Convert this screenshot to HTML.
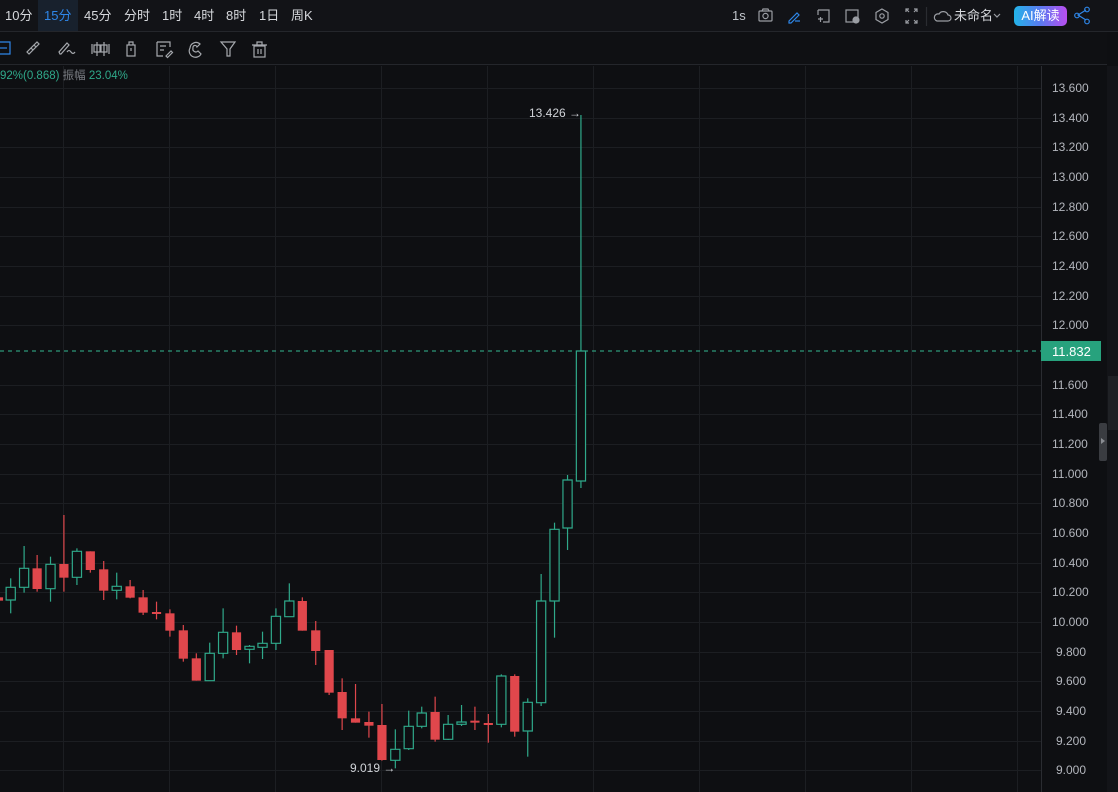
<!DOCTYPE html>
<html><head><meta charset="utf-8"><style>
*{margin:0;padding:0;box-sizing:border-box}
body{width:1118px;height:792px;background:#0e0f12;overflow:hidden;font-family:"Liberation Sans","Noto Sans CJK SC",sans-serif;position:relative;color:#d0d3d8}
.top{position:absolute;left:0;top:0;width:1118px;height:32px;background:#121317;border-bottom:1px solid #24262b}
.tab{position:absolute;top:0;height:31px;line-height:31px;font-size:13px;color:#d6d8dc}
.tb{position:absolute;left:0;top:32px;width:1107px;height:33px;background:#0f1013;border-bottom:1px solid #24262b}
.ax{position:absolute;left:1052px;font-size:12px;color:#b3b6bd}
svg{position:absolute;left:0;top:0}
</style></head><body>
<svg width="1118" height="792">
<g stroke="#1c1e22" stroke-width="1">
<line x1="63.5" y1="66" x2="63.5" y2="792"/><line x1="169.5" y1="66" x2="169.5" y2="792"/><line x1="275.5" y1="66" x2="275.5" y2="792"/><line x1="381.5" y1="66" x2="381.5" y2="792"/><line x1="487.5" y1="66" x2="487.5" y2="792"/><line x1="593.5" y1="66" x2="593.5" y2="792"/><line x1="699.5" y1="66" x2="699.5" y2="792"/><line x1="805.5" y1="66" x2="805.5" y2="792"/><line x1="911.5" y1="66" x2="911.5" y2="792"/><line x1="1017.5" y1="66" x2="1017.5" y2="792"/>
<line x1="0" y1="88.5" x2="1041" y2="88.5"/><line x1="0" y1="118.5" x2="1041" y2="118.5"/><line x1="0" y1="147.5" x2="1041" y2="147.5"/><line x1="0" y1="177.5" x2="1041" y2="177.5"/><line x1="0" y1="207.5" x2="1041" y2="207.5"/><line x1="0" y1="236.5" x2="1041" y2="236.5"/><line x1="0" y1="266.5" x2="1041" y2="266.5"/><line x1="0" y1="296.5" x2="1041" y2="296.5"/><line x1="0" y1="325.5" x2="1041" y2="325.5"/><line x1="0" y1="385.5" x2="1041" y2="385.5"/><line x1="0" y1="414.5" x2="1041" y2="414.5"/><line x1="0" y1="444.5" x2="1041" y2="444.5"/><line x1="0" y1="474.5" x2="1041" y2="474.5"/><line x1="0" y1="503.5" x2="1041" y2="503.5"/><line x1="0" y1="533.5" x2="1041" y2="533.5"/><line x1="0" y1="563.5" x2="1041" y2="563.5"/><line x1="0" y1="592.5" x2="1041" y2="592.5"/><line x1="0" y1="622.5" x2="1041" y2="622.5"/><line x1="0" y1="652.5" x2="1041" y2="652.5"/><line x1="0" y1="681.5" x2="1041" y2="681.5"/><line x1="0" y1="711.5" x2="1041" y2="711.5"/><line x1="0" y1="741.5" x2="1041" y2="741.5"/><line x1="0" y1="770.5" x2="1041" y2="770.5"/>
</g>
<line x1="1041.5" y1="66" x2="1041.5" y2="792" stroke="#2a2c31"/>
<line x1="0" y1="351" x2="1041" y2="351" stroke="#34b892" stroke-width="1" stroke-dasharray="4,4"/>
<g transform="translate(0,510) scale(0.3827,0.33333)" id="c"></g>
<text x="529" y="117" font-size="12" fill="#d0d3d8" font-family="Liberation Sans">13.426 →</text>
<text x="350" y="772" font-size="12" fill="#d0d3d8" font-family="Liberation Sans">9.019 →</text>
<rect x="1041" y="341" width="60" height="20" fill="#27a27d"/>
<text x="1052" y="356" font-size="13" fill="#fff" font-family="Liberation Sans">11.832</text>
<rect x="1107" y="66" width="11" height="726" fill="#131418"/>
<rect x="1108" y="376" width="10" height="54" fill="#1f2125"/>
<rect x="1099" y="423" width="8" height="38" rx="2" fill="#3a3c41"/>
<path d="M1101 438 l4 3 -4 3z" fill="#8a8d93"/>
</svg>
<div class="top">
<div class="tab" style="left:5px">10分</div>
<div class="tab" style="left:38px;width:40px;background:#18212d;color:#2e86e8;padding-left:6px">15分</div>
<div class="tab" style="left:84px">45分</div>
<div class="tab" style="left:124px">分时</div>
<div class="tab" style="left:162px">1时</div>
<div class="tab" style="left:194px">4时</div>
<div class="tab" style="left:226px">8时</div>
<div class="tab" style="left:259px">1日</div>
<div class="tab" style="left:291px">周K</div>
<div class="tab" style="left:732px;color:#c0c4ca">1s</div>
<svg width="1118" height="32" style="left:0;top:0" fill="none" stroke="#9a9da3" stroke-width="1.2">
<rect x="759" y="11" width="13" height="10" rx="1"/><circle cx="765.5" cy="16" r="2.6"/><path d="M762 11 l1-2 h5 l1 2"/>
<path d="M789 21 l8-8 2 2 -8 8 h-2z M795 21 h5" stroke="#2e86e8"/>
<path d="M818 10 h11 v12 h-6 M818 10 v5 M818 19 h5 M820.5 17 v5" />
<rect x="846" y="10" width="12" height="12"/><circle cx="856" cy="20" r="3" fill="#9a9da3"/>
<path d="M882 9 l6 3.5 v7 l-6 3.5 -6-3.5 v-7z"/><circle cx="882" cy="16" r="2.2"/>
<path d="M906 12 v-3 h3 M914 9 h3 v3 M917 20 v3 h-3 M909 23 h-3 v-3 M906 9 l3 3 M917 9 l-3 3 M917 23 l-3-3 M906 23 l3-3"/>
<line x1="926.5" y1="7" x2="926.5" y2="26" stroke="#2a2c31"/>
<path d="M937 21 h11 a3 3 0 0 0 0-6 a5 5 0 0 0-9-1 a3.5 3.5 0 0 0-2 7z"/>
<path d="M994 14 l3 3 3-3"/>
<path d="M1086 10 l-8 5 8 5" stroke="#2e86e8"/><circle cx="1087" cy="9.5" r="2.3" stroke="#2e86e8"/><circle cx="1077" cy="15.5" r="2.3" stroke="#2e86e8"/><circle cx="1087" cy="21.5" r="2.3" stroke="#2e86e8"/>
</svg>
<div class="tab" style="left:954px;color:#d6d8dc;font-size:13px">未命名</div>
<div style="position:absolute;left:1014px;top:6px;width:53px;height:20px;border-radius:5px;background:linear-gradient(90deg,#23b3e8,#5a7af0,#b94ef0);color:#fff;font-size:13px;line-height:20px;text-align:center">AI解读</div>
</div>
<div class="tb">
<svg width="300" height="33" fill="none" stroke="#a6a9ae" stroke-width="1.2">
<path d="M0 10 h10 v12 h-10" stroke="#2e86e8"/><path d="M-1 16 h8" stroke="#2e86e8"/>
<path d="M29 22 l-2-2 10-10 2 2z M31 16 l2 2 M34 13 l2 2"/>
<path d="M60 22 l-1-2 8-9 2 2 -8 9z M67 20 q2-3 4 0 t4 0"/>
<path d="M92 12 v10 M97 10 v14 M104 10 v14 M109 12 v10"/><rect x="94" y="13" width="6" height="7"/><rect x="101" y="13" width="6" height="7"/>
<rect x="127" y="13" width="8" height="11"/><path d="M129 13 v-3 h4 v3 M131 16 v3"/>
<path d="M157 10 h13 v5 M157 10 v14 h6 M160 14 h6 M160 18 h4 M166 24 l5-5 1.5 1.5 -5 5z"/>
<path d="M190 16 a6 6 0 0 1 10-4 l-3 3 a2 2 0 0 0-4 1 a3 3 0 0 0 5 3 l3 3 a6 6 0 0 1-11-6z"/>
<path d="M221 10 h14 l-5 7 v7 h-3 v-7z"/>
<rect x="254" y="14" width="11" height="11"/><path d="M252 13 h15 M257 13 v-3 h5 v3 M258 17 v5 M261 17 v5"/>
</svg>
</div>
<div style="position:absolute;left:0;top:67px;font-size:11.5px;color:#2fa98a">92%(0.868) <span style="color:#7b7e84">振幅</span> 23.04%</div>
<div class="ax" style="top:81px">13.600</div><div class="ax" style="top:111px">13.400</div><div class="ax" style="top:140px">13.200</div><div class="ax" style="top:170px">13.000</div><div class="ax" style="top:200px">12.800</div><div class="ax" style="top:229px">12.600</div><div class="ax" style="top:259px">12.400</div><div class="ax" style="top:289px">12.200</div><div class="ax" style="top:318px">12.000</div><div class="ax" style="top:378px">11.600</div><div class="ax" style="top:407px">11.400</div><div class="ax" style="top:437px">11.200</div><div class="ax" style="top:467px">11.000</div><div class="ax" style="top:496px">10.800</div><div class="ax" style="top:526px">10.600</div><div class="ax" style="top:556px">10.400</div><div class="ax" style="top:585px">10.200</div><div class="ax" style="top:615px">10.000</div><div class="ax" style="top:645px;left:1056px">9.800</div><div class="ax" style="top:674px;left:1056px">9.600</div><div class="ax" style="top:704px;left:1056px">9.400</div><div class="ax" style="top:734px;left:1056px">9.200</div><div class="ax" style="top:763px;left:1056px">9.000</div>
<script>
var d=[[-4,'r',258,262,272,276],[28,'g',205,232,270,310],[63,'g',108,175,232,248],[97,'r',135,175,237,245],[132,'g',140,163,236,275],[167,'r',15,162,203,245],[201,'g',115,124,202,225],[236,'r',124,124,180,188],[271,'r',153,178,242,270],[305,'g',188,229,241,268],[340,'r',210,229,263,265],[374,'r',240,262,308,315],[409,'r',275,306,311,328],[444,'r',298,310,362,380],[479,'r',345,361,446,455],[513,'r',430,445,512,512],[548,'g',398,430,512,512],[583,'g',295,367,430,445],[618,'r',347,367,420,435],[652,'g',405,409,418,460],[686,'g',365,400,412,447],[721,'g',295,319,400,420],[756,'g',220,273,320,320],[790,'r',262,273,362,362],[825,'r',333,361,423,465],[860,'r',420,420,548,555],[894,'r',505,546,625,660],[929,'r',522,625,638,638],[964,'r',605,636,647,683],[998,'r',582,645,750,752],[1033,'g',658,718,751,775],[1068,'g',602,649,716,720],[1102,'g',590,609,649,655],[1137,'r',560,606,689,695],[1171,'g',615,643,688,690],[1206,'g',585,636,643,648],[1241,'r',590,632,637,660],[1276,'r',612,639,644,698],[1310,'g',493,498,643,652],[1345,'r',493,498,665,680],[1379,'g',565,577,663,740],[1414,'g',192,273,578,588],[1449,'g',38,58,273,383],[1483,'g',-105,-90,54,120],[1518,'g',-1185,-477,-87,-66]];
var s='';d.forEach(function(c){var col=c[1]=='g'?'#2fa98a':'#e0474c';s+='<line x1="'+c[0]+'" y1="'+c[2]+'" x2="'+c[0]+'" y2="'+c[5]+'" stroke="'+col+'" stroke-width="1.2" vector-effect="non-scaling-stroke"/>';var h=Math.max(c[4]-c[3],6);if(c[1]=='g')s+='<rect x="'+(c[0]-12)+'" y="'+c[3]+'" width="24" height="'+h+'" fill="#0e0f12" stroke="'+col+'" stroke-width="1.2" vector-effect="non-scaling-stroke"/>';else s+='<rect x="'+(c[0]-12)+'" y="'+c[3]+'" width="24" height="'+h+'" fill="'+col+'"/>';});
document.getElementById('c').innerHTML=s;
</script>
</body></html>
